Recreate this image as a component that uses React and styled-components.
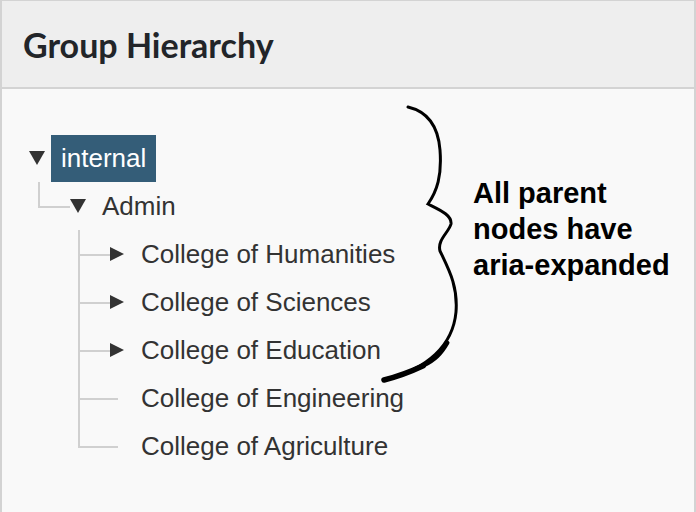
import React from 'react';
import styled, { createGlobalStyle } from "styled-components";

const GlobalStyle = createGlobalStyle`
    html, body {
        margin: 0;
        padding: 0;
        background: #f9f9f9;
    }
`

const SPanel = styled.section`
    position: relative;
    box-sizing: border-box;
    width: 696px;
    height: 512px;
    border: 2px solid #d3d3d3;
    border-top-width: 1px;
    border-bottom: none;
    background: #f9f9f9;
    overflow: hidden;
`
const SHeader = styled.header`
    display: flex;
    align-items: center;
    height: 88px;
    padding: 3px 0 0 21px;
    box-sizing: border-box;
    background: #eeeeee;
    border-bottom: 2px solid #d3d3d3;
`
const STitle = styled.h2`
    margin: 0;
    font-family: Lato, "Liberation Sans", sans-serif;
    font-weight: 700;
    font-size: 34px;
    line-height: 1.2;
    color: #222529;
`
const SBody = styled.div`
    padding: 45px 0 0 27px;
`
const STree = styled.ul`
    list-style: none;
    margin: 0;
    padding: 0;
    font-family: "Liberation Sans", Arial, sans-serif;
    font-size: 26px;
    color: #333;
`
const SGroup = styled.ul`
    list-style: none;
    margin: 0 0 0 ${p => p.$indent}px;
    padding: 0;
`
const SRow = styled.div`
    display: flex;
    align-items: center;
    height: 48px;
`
const SConnector = styled.div`
    display: flex;
    flex-direction: column;
    align-self: stretch;
    width: ${p => p.$width}px;
    flex: none;

    & > span {
        flex: 1;
        box-sizing: border-box;
    }
    & > span:first-child {
        border-left: 2px solid #d0d0d0;
        border-bottom: 2px solid #d0d0d0;
        margin-bottom: -1px;
    }
    & > span:last-child {
        border-left: 2px solid ${p => (p.$last ? "transparent" : "#d0d0d0")};
    }
`
const SToggle = styled.svg`
    flex: none;
    display: block;
    margin-right: ${p => (p.$open ? 6 : 7)}px;
    fill: #333;
`
const SLeafGap = styled.span`
    flex: none;
    width: 21px;
    display: flex;
    align-items: center;

    &::before {
        content: "";
        width: 8px;
        height: 2px;
        margin-top: 1px;
        background: #d0d0d0;
    }
`
const SLabel = styled.span`
    display: flex;
    align-items: center;
    height: 47px;
    padding: 0 10px;
    white-space: nowrap;
    background: ${p => (p.$selected ? "#345d78" : "transparent")};
    color: ${p => (p.$selected ? "#fff" : "#333")};
`
const SBrace = styled.svg`
    position: absolute;
    left: -2px;
    top: -1px;
    pointer-events: none;
`
const SNote = styled.p`
    position: absolute;
    left: 471px;
    top: 174px;
    margin: 0;
    font-family: "Liberation Sans", Arial, sans-serif;
    font-weight: 700;
    font-size: 29px;
    line-height: 36px;
    color: #000;
`

const colleges = [
    { name: "College of Humanities", parent: true },
    { name: "College of Sciences", parent: true },
    { name: "College of Education", parent: true },
    { name: "College of Engineering", parent: false },
    { name: "College of Agriculture", parent: false },
]

const Toggle = ({ open }) =>
    open ? (
        <SToggle $open width="16" height="14" viewBox="0 0 16 14">
            <path d="M0,0 H16 L8,14 Z" />
        </SToggle>
    ) : (
        <SToggle width="14" height="14" viewBox="0 0 14 14">
            <path d="M0,0 L14,7 L0,14 Z" />
        </SToggle>
    )

const Node = ({ label, parent, open, selected, connector, last, children, indent }) => (
    <li>
        <SRow>
            {connector && (
                <SConnector $width={connector} $last={last}>
                    <span />
                    <span />
                </SConnector>
            )}
            {parent ? <Toggle open={open} /> : <SLeafGap />}
            <SLabel $selected={selected}>{label}</SLabel>
        </SRow>
        {children && <SGroup $indent={indent}>{children}</SGroup>}
    </li>
)

export default function App() {
    return (
        <>
            <GlobalStyle />
            <SPanel>
                <SHeader>
                    <STitle>Group Hierarchy</STitle>
                </SHeader>
                <SBody>
                    <STree role="tree">
                        <Node label="internal" parent open selected indent={9}>
                            <Node label="Admin" parent open connector={32} last indent={40}>
                                {colleges.map((c, i) => (
                                    <Node
                                        key={c.name}
                                        label={c.name}
                                        parent={c.parent}
                                        connector={32}
                                        last={i === colleges.length - 1}
                                    />
                                ))}
                            </Node>
                        </Node>
                    </STree>
                </SBody>
                <SBrace width="696" height="512" viewBox="0 0 696 512">
                    <path
                        d="M408,107 C425,111 438,124 440,150 C442,176 437,191 428,204 C440,210 452,215 451,224 C449,232 437,240 440,251 C449,270 458,286 456,312 C453,345 428,369 384,380"
                        fill="none" stroke="#000" strokeWidth="3" strokeLinecap="round"
                    />
                    <path
                        d="M447.5,342.75 C441,354 435,360 423.25,365.75 C410,372 400,376 384,380"
                        fill="none" stroke="#000" strokeWidth="4" strokeLinecap="round"
                    />
                    <path
                        d="M423.25,365.75 C410,372 400,376 384,380"
                        fill="none" stroke="#000" strokeWidth="5.5" strokeLinecap="round"
                    />
                </SBrace>
                <SNote>
                    All parent<br />
                    nodes have<br />
                    aria-expanded
                </SNote>
            </SPanel>
        </>
    )
}
